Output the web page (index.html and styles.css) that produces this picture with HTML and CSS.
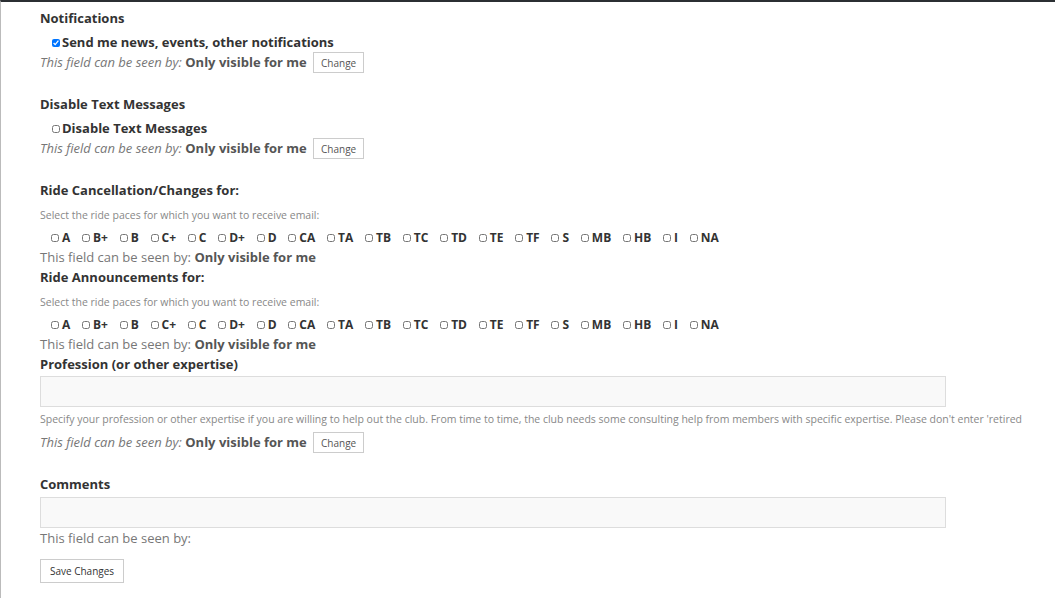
FILE: index.html
```html
<!DOCTYPE html>
<html lang="en">
<head>
<meta charset="UTF-8">
<meta name="viewport" content="width=device-width, initial-scale=1.0">
<title>Profile Settings</title>

<link rel="stylesheet" href="styles.css">
</head>

<body>

<div class="page">

  <div class="field gap">
    <div class="label">Notifications</div>
    <label class="check"><input type="checkbox" checked>Send me news, events, other notifications</label>
    <div class="seen"><i>This field can be seen by:</i> <b>Only visible for me</b> <button class="change">Change</button></div>
  </div>

  <div class="field gap">
    <div class="label">Disable Text Messages</div>
    <label class="check"><input type="checkbox">Disable Text Messages</label>
    <div class="seen"><i>This field can be seen by:</i> <b>Only visible for me</b> <button class="change">Change</button></div>
  </div>

  <div class="field">
    <div class="label">Ride Cancellation/Changes for:</div>
    <div class="help">Select the ride paces for which you want to receive email:</div>
    <div class="paces" id="paces1"></div>
    <div class="seen">This field can be seen by: <b>Only visible for me</b></div>
  </div>

  <div class="field">
    <div class="label">Ride Announcements for:</div>
    <div class="help">Select the ride paces for which you want to receive email:</div>
    <div class="paces" id="paces2"></div>
    <div class="seen">This field can be seen by: <b>Only visible for me</b></div>
  </div>

  <div class="field gap">
    <div class="label">Profession (or other expertise)</div>
    <input class="text tight" type="text">
    <div class="help note">Specify your profession or other expertise if you are willing to help out the club. From time to time, the club needs some consulting help from members with specific expertise. Please don't enter 'retired</div>
    <div class="seen"><i>This field can be seen by:</i> <b>Only visible for me</b> <button class="change">Change</button></div>
  </div>

  <div class="field">
    <div class="label">Comments</div>
    <input class="text" type="text">
    <div class="seen">This field can be seen by:</div>
  </div>

  <button class="save">Save Changes</button>

</div>

<script>
var paces = ["A","B+","B","C+","C","D+","D","CA","TA","TB","TC","TD","TE","TF","S","MB","HB","I","NA"];

function fillPaces(id){
  var box = document.getElementById(id);
  paces.forEach(function(p){
    var l = document.createElement("label");
    l.className = "pace";
    l.innerHTML = '<input type="checkbox">' + p;
    box.appendChild(l);
  });
}

fillPaces("paces1");
fillPaces("paces2");
</script>

</body>
</html>
```

FILE: styles.css
```css
html {
  background: white;
}

body {
  margin: 0;
  font-family: "Open Sans", "Liberation Sans", sans-serif;
  font-size: 13px;
  color: #333;
  border-top: 2px solid #2b2f33;
  border-left: 1px solid #bbb;
  min-height: 598px;
  box-sizing: border-box;
}

.page {
  padding: 6px 0 0 39px;
}

.field.gap {
  margin-bottom: 22px;
}

.label {
  font-weight: bold;
  line-height: 20px;
}

.check {
  display: block;
  margin: 4px 0 0 12px;
  line-height: 20px;
  font-weight: bold;
}

.check input {
  width: 8px;
  height: 8px;
  margin: 0 2px 0 0;
  vertical-align: 0;
}

.seen {
  color: #777;
  line-height: 20px;
  height: 20px;
}

.seen b {
  color: #555;
}

.change {
  font-family: "Open Sans", "Liberation Sans", sans-serif;
  font-size: 10px;
  color: #555;
  background: white;
  border: 1px solid #ccc;
  height: 21px;
  width: 51px;
  padding: 0;
  margin-left: 3px;
  vertical-align: top;
}

.help {
  font-size: 10.5px;
  color: #888;
  line-height: 20px;
  margin-top: 5px;
}

.help.note {
  margin-top: 2px;
  white-space: nowrap;
}

.paces {
  margin: 3px 0 0 11px;
  line-height: 20px;
  height: 19px;
  font-size: 12px;
  font-weight: bold;
  white-space: nowrap;
}

.pace {
  margin-right: 11.75px;
}

.pace input {
  width: 8px;
  height: 8px;
  margin: 0 3px 0 0;
  vertical-align: 0;
}

.text {
  display: block;
  box-sizing: border-box;
  width: 906px;
  height: 31px;
  margin-top: 3px;
  background: #f9f9f9;
  border: 1px solid #ddd;
  padding: 0;
}

.text.tight {
  margin-top: 2px;
}

.note + .seen {
  margin-top: 3px;
}

.save {
  font-family: "Open Sans", "Liberation Sans", sans-serif;
  font-size: 10px;
  color: #333;
  background: white;
  border: 1px solid #ccc;
  width: 84px;
  height: 24px;
  padding: 0;
  margin-top: 11px;
}
```
